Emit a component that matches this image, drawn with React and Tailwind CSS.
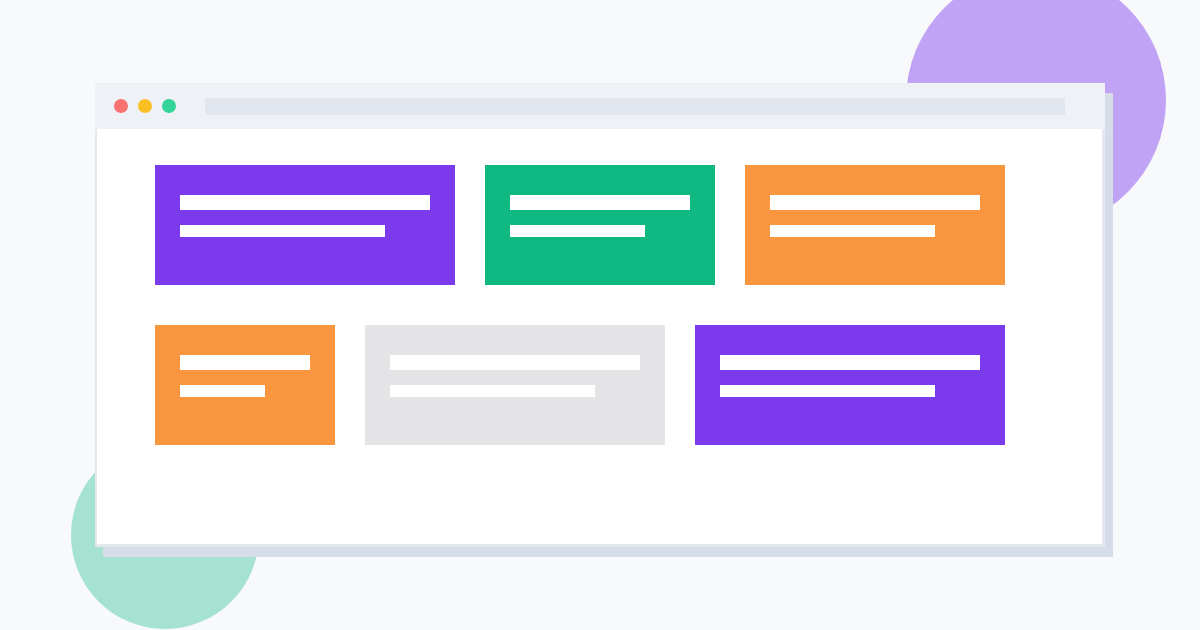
import React from 'react';

const rows = [
  [
    { w: 'w-[300px]', bg: 'bg-[#7c3aed]', a: 'w-[250px]', b: 'w-[205px]' },
    { w: 'w-[230px]', bg: 'bg-[#10b981]', a: 'w-[180px]', b: 'w-[135px]' },
    { w: 'w-[260px]', bg: 'bg-[#fb9640]', a: 'w-[210px]', b: 'w-[165px]' },
  ],
  [
    { w: 'w-[180px]', bg: 'bg-[#fb9640]', a: 'w-[130px]', b: 'w-[85px]' },
    { w: 'w-[300px]', bg: 'bg-[#e4e4e6]', a: 'w-[250px]', b: 'w-[205px]' },
    { w: 'w-[310px]', bg: 'bg-[#7c3aed]', a: 'w-[260px]', b: 'w-[215px]' },
  ],
];

const Card = ({ card }) => (
  <div className={`${card.w} ${card.bg} h-[120px] pl-[25px] pt-[30px] flex flex-col gap-[15px]`}>
    <div className={`${card.a} h-[15px] bg-white`} />
    <div className={`${card.b} h-[12px] bg-white`} />
  </div>
);

export default function App() {
  return (
    <div className="relative w-[1200px] h-[630px] overflow-hidden bg-[#f7f9fb] pl-[95px] pt-[83px]">
      {/* decorative blobs behind the window */}
      <div className="absolute left-[906px] top-[-30px] w-[260px] h-[260px] rounded-full bg-[#c0a3f4]" />
      <div className="absolute left-[71px] top-[441px] w-[188px] h-[188px] rounded-full bg-[#a6e2d0]" />

      <div className="relative w-[1010px] h-[464px] bg-[#e3e7ee] flex flex-col shadow-[8px_10px_0_#d6dce8]">
        {/* title bar */}
        <div className="h-[46px] bg-[#eef2f7] flex items-center pl-[19px]">
          <div className="flex gap-[10px]">
            <span className="w-[14px] h-[14px] rounded-full bg-[#f87171]" />
            <span className="w-[14px] h-[14px] rounded-full bg-[#fbbf24]" />
            <span className="w-[14px] h-[14px] rounded-full bg-[#34d399]" />
          </div>
          <div className="ml-[29px] w-[860px] h-[17px] bg-[#e2e7ef]" />
        </div>

        {/* page body */}
        <div className="flex-1 bg-white ml-[2px] mr-[3px] mb-[3px] pl-[58px] pt-[36px] flex flex-col gap-[40px]">
          {rows.map((row, i) => (
            <div key={i} className="flex gap-[30px]">
              {row.map((card, j) => (
                <Card key={j} card={card} />
              ))}
            </div>
          ))}
        </div>
      </div>
    </div>
  );
}
